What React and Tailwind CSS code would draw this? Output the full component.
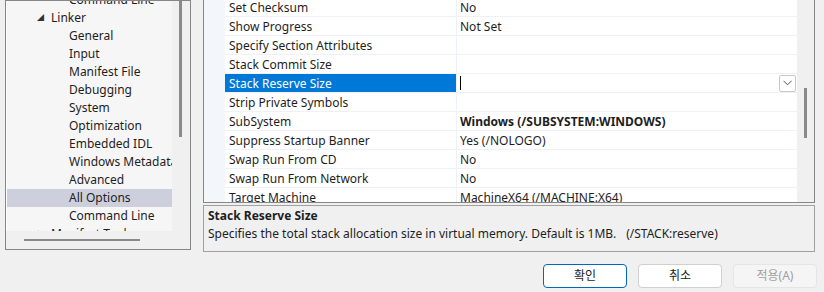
import React from 'react';

const font = { fontFamily: '"Noto Sans", "Noto Sans CJK KR", sans-serif' };

const treeItems = [
  { label: 'Command Line', level: 2 },
  { label: 'Linker', level: 1, open: true },
  { label: 'General', level: 2 },
  { label: 'Input', level: 2 },
  { label: 'Manifest File', level: 2 },
  { label: 'Debugging', level: 2 },
  { label: 'System', level: 2 },
  { label: 'Optimization', level: 2 },
  { label: 'Embedded IDL', level: 2 },
  { label: 'Windows Metadata', level: 2 },
  { label: 'Advanced', level: 2 },
  { label: 'All Options', level: 2, selected: true },
  { label: 'Command Line', level: 2 },
  { label: 'Manifest Tool', level: 1, closed: true },
];

const props = [
  ['Set Checksum', 'No'],
  ['Show Progress', 'Not Set'],
  ['Specify Section Attributes', ''],
  ['Stack Commit Size', ''],
  ['Stack Reserve Size', '', 'selected'],
  ['Strip Private Symbols', ''],
  ['SubSystem', 'Windows (/SUBSYSTEM:WINDOWS)', 'bold'],
  ['Suppress Startup Banner', 'Yes (/NOLOGO)'],
  ['Swap Run From CD', 'No'],
  ['Swap Run From Network', 'No'],
  ['Target Machine', 'MachineX64 (/MACHINE:X64)'],
];

const TreePanel = () => (
  <div className="flex h-[250px] w-[186px] flex-col border border-[#868686] bg-[#f0f0f0]">
    <div className="flex min-h-0 flex-1">
      {/* tree */}
      <div className="w-[166px] overflow-hidden border-l border-white bg-[#f6f6f6]">
        <div className="-mt-[10px]">
          {treeItems.map((it, i) => (
            <div
              key={i}
              className={`flex h-[18px] items-center whitespace-nowrap text-[12px] text-[#1e1e1e] ${it.selected ? 'bg-[#cdd0dc]' : ''}`}
            >
              {it.level === 1 ? (
                <div className="flex items-center pl-[30px]">
                  <span className="w-[14px] text-[7px] text-[#333]">{it.open ? '◢' : '▷'}</span>
                  <span>{it.label}</span>
                </div>
              ) : (
                <span className="pl-[62px]">{it.label}</span>
              )}
            </div>
          ))}
        </div>
      </div>
      {/* vertical scrollbar */}
      <div className="flex w-[18px] justify-center">
        <div className="mr-[1px] h-[136px] w-[3px] bg-[#8a8a8a]" />
      </div>
    </div>
    {/* horizontal scrollbar */}
    <div className="flex h-[18px] items-center pl-[18px]">
      <div className="h-[2px] w-[116px] bg-[#8a8a8a]" />
    </div>
  </div>
);

const ChevronDown = () => (
  <svg width="9" height="6" viewBox="0 0 9 6" fill="none">
    <path d="M0.5 0.8 L4.5 4.8 L8.5 0.8" stroke="#555" strokeWidth="1" />
  </svg>
);

const PropertyGrid = () => (
  <div className="flex h-[203px] border border-[#868686] border-t-0">
    <div className="w-[21px] bg-[#f3f6fb]" />
    <div className="min-w-0 flex-1 overflow-hidden bg-white">
      <div className="-mt-[2px]">
        {props.map(([name, value, flag], i) => (
          <div key={i} className="flex h-[19px] border-b border-[#eef2f8] text-[12px]">
            <div
              className={`flex w-[232px] items-center border-r border-[#eef2f8] pl-[4px] pt-[2px] whitespace-nowrap ${flag === 'selected' ? 'bg-[#0078d7] text-white' : 'text-[#1e1e1e]'}`}
            >
              {name}
            </div>
            <div className={`flex flex-1 items-center pl-[3px] pt-[2px] whitespace-nowrap text-[#1e1e1e] ${flag === 'bold' ? 'font-bold' : ''}`}>
              {flag === 'selected' ? (
                <div className="-mt-[2px] flex flex-1 items-center justify-between pr-[1px]">
                  <div className="h-[14px] w-[1px] bg-black" />
                  <div className="flex h-[17px] w-[17px] items-center justify-center rounded-[2px] border border-[#c8c8c8] bg-white">
                    <ChevronDown />
                  </div>
                </div>
              ) : (
                value
              )}
            </div>
          </div>
        ))}
      </div>
    </div>
    <div className="flex w-[17px] justify-center bg-[#f0f0f0]">
      <div className="mt-[88px] h-[50px] w-[3px] bg-[#8a8a8a]" />
    </div>
  </div>
);

const Description = () => (
  <div className="mt-[2px] h-[47px] border border-[#a0a0a0] px-[4px] pt-[1px] text-[12px] text-[#1e1e1e]">
    <div className="font-bold leading-[18px]">Stack Reserve Size</div>
    <div className="flex gap-[10px] whitespace-nowrap leading-[18px]">
      <span>Specifies the total stack allocation size in virtual memory. Default is 1MB.</span>
      <span>(/STACK:reserve)</span>
    </div>
  </div>
);

const Button = ({ children, variant }) => {
  const styles = {
    primary: 'border-[#0067c0] border-[1.5px] bg-white text-[#1a1a1a]',
    normal: 'border-[#d0d0d0] bg-white text-[#1a1a1a]',
    disabled: 'border-[#e5e5e5] bg-[#f5f5f5] text-[#a0a0a0]',
  };
  return (
    <div className={`flex h-[24px] w-[84px] items-center justify-center rounded-[4px] border text-[12px] ${styles[variant]}`}>
      {children}
    </div>
  );
};

export default function App() {
  return (
    <div className="h-[292px] w-[824px] overflow-hidden bg-[#f0f0f0]" style={font}>
      <div className="flex h-[252px] gap-[12px] pl-[5px]">
        <TreePanel />
        <div className="flex w-[612px] flex-col">
          <PropertyGrid />
          <Description />
        </div>
      </div>
      <div className="flex justify-end gap-[11px] pr-[7px] pt-[12px]">
        <Button variant="primary">확인</Button>
        <Button variant="normal">취소</Button>
        <Button variant="disabled">적용(A)</Button>
      </div>
    </div>
  );
}
